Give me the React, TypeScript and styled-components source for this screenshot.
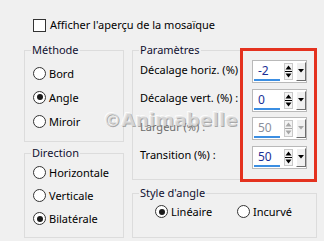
import styled, { createGlobalStyle } from "styled-components";

const GlobalStyle = createGlobalStyle`
	html, body {
		margin: 0;
		padding: 0;
		background: #f0f0f0;
	}
	body {
		font-family: "Noto Sans", "Open Sans", sans-serif;
		font-size: 11px;
		color: #000;
	}
`;

const Dialog = styled.div`
	position: relative;
	width: 324px;
	height: 241px;
	box-sizing: border-box;
	padding: 18px 0 0 24px;
	background: #f0f0f0;
	overflow: hidden;
`;

const TopRow = styled.label`
	display: flex;
	align-items: center;
	gap: 4px;
	height: 14px;
	margin-left: 9px;
	line-height: 14px;
`;

const CheckBox = styled.span`
	width: 13px;
	height: 13px;
	box-sizing: border-box;
	border: 1px solid #333;
	background: #fff;
`;

const Columns = styled.div`
	display: flex;
	gap: 8px;
	margin-top: 10px;
`;

const Column = styled.div<{ $width: number; $gap: number }>`
	display: flex;
	flex-direction: column;
	gap: ${(p) => p.$gap}px;
	width: ${(p) => p.$width}px;
`;

const Group = styled.fieldset<{ $height: number }>`
	margin: 0;
	padding: 0;
	min-width: 0;
	box-sizing: border-box;
	height: ${(p) => p.$height}px;
	border: 1px solid #dcdcdc;
	legend {
		margin-left: 6px;
		padding: 0 1px;
		height: 16px;
		line-height: 16px;
		color: #101030;
	}
`;

const RadioList = styled.div<{ $row: number; $top: number }>`
	display: flex;
	flex-direction: column;
	padding: ${(p) => p.$top}px 0 0 8px;
	> * {
		height: ${(p) => p.$row}px;
	}
`;

const RadioRow = styled.div`
	display: flex;
	align-items: center;
	gap: 3px;
`;

const RadioDot = styled.span<{ $checked?: boolean }>`
	position: relative;
	width: 13px;
	height: 13px;
	box-sizing: border-box;
	border: 1px solid #333;
	border-radius: 50%;
	background: #fff;
	&::after {
		content: "";
		display: ${(p) => (p.$checked ? "block" : "none")};
		position: absolute;
		left: 2.5px;
		top: 2.5px;
		width: 6px;
		height: 6px;
		border-radius: 50%;
		background: #1a1a1a;
	}
`;

const InlineRadios = styled.div`
	display: grid;
	grid-template-columns: 82px auto;
	padding: 3px 0 0 22px;
`;

const ParamGrid = styled.div`
	display: grid;
	grid-template-columns: 1fr 55px;
	align-items: center;
	row-gap: 5.67px;
	padding: 2px 9px 0 7px;
`;

const ParamLabel = styled.span<{ $disabled?: boolean }>`
	margin-top: -5px;
	color: ${(p) => (p.$disabled ? "#6d6d6d" : "#000")};
`;

const Spin = styled.div<{ $disabled?: boolean }>`
	display: flex;
	align-items: center;
	width: 55px;
	height: 23px;
	box-sizing: border-box;
	border: 1px solid #b9b9b9;
	background: #fff;
	color: ${(p) => (p.$disabled ? "#8a8f9c" : "#1a2f96")};
	font-size: 12px;
	svg {
		display: block;
	}
`;

const Value = styled.div`
	width: 26px;
	height: 19px;
	margin: 0 0 0 1px;
	padding-left: 4px;
	box-sizing: border-box;
	line-height: 17px;
	border-bottom: 2px solid #3b8ee2;
`;

const Arrows = styled.div`
	margin-left: 4px;
`;

const DropButton = styled.div`
	display: flex;
	justify-content: center;
	width: 10px;
	height: 19px;
	margin-left: 3px;
	box-sizing: border-box;
	padding-top: 6px;
	background: #f0f0f0;
	border-top: 1px solid #fff;
	border-left: 1px solid #fff;
	border-right: 1px solid #6d6d6d;
	border-bottom: 1px solid #6d6d6d;
`;

const Highlight = styled.div`
	position: absolute;
	left: 240px;
	top: 48px;
	width: 77px;
	height: 134px;
	box-sizing: border-box;
	border: 3px solid #e4321f;
	pointer-events: none;
`;

const Watermark = styled.div`
	position: absolute;
	left: 103px;
	top: 109px;
	font-family: "DejaVu Sans", sans-serif;
	font-size: 18px;
	font-weight: bold;
	letter-spacing: 0.3px;
	color: rgba(225, 225, 225, 0.75);
	text-shadow: 1px 1px 0 rgba(120, 120, 120, 0.6), -1px -1px 0 rgba(255, 255, 255, 0.8);
	pointer-events: none;
`;

function Radio({ label, checked }: { label: string; checked?: boolean }) {
	return (
		<RadioRow>
			<RadioDot $checked={checked} />
			<span>{label}</span>
		</RadioRow>
	);
}

function SpinBox({ value, disabled }: { value: string; disabled?: boolean }) {
	const ink = disabled ? "#a6a6a6" : "#000";
	return (
		<Spin $disabled={disabled}>
			<Value>{value}</Value>
			<Arrows>
				<svg width="9" height="17" viewBox="0 0 9 17">
					<rect x="0.5" y="0.5" width="8" height="16" fill="#f4f4f4" stroke="#c8c8c8" />
					<path d="M4.5 2.5 L7.5 6.5 L1.5 6.5 Z" fill={ink} />
					<line x1="1" y1="8.5" x2="8" y2="8.5" stroke={ink} />
					<path d="M1.5 10.5 L7.5 10.5 L4.5 14.5 Z" fill={ink} />
				</svg>
			</Arrows>
			<DropButton>
				<svg width="6" height="4" viewBox="0 0 6 4">
					<path d="M0 0 L6 0 L3 3.5 Z" fill={ink} />
				</svg>
			</DropButton>
		</Spin>
	);
}

export default function App() {
	return (
		<>
			<GlobalStyle />
			<Dialog>
				<TopRow>
					<CheckBox />
					<span>Afficher l'aperçu de la mosaïque</span>
				</TopRow>
				<Columns>
					<Column $width={100} $gap={3}>
						<Group $height={100}>
							<legend>Méthode</legend>
							<RadioList $row={24} $top={3}>
								<Radio label="Bord" />
								<Radio label="Angle" checked />
								<Radio label="Miroir" />
							</RadioList>
						</Group>
						<Group $height={93}>
							<legend>Direction</legend>
							<RadioList $row={23} $top={0}>
								<Radio label="Horizontale" />
								<Radio label="Verticale" />
								<Radio label="Bilatérale" checked />
							</RadioList>
						</Group>
					</Column>
					<Column $width={185} $gap={5}>
						<Group $height={138}>
							<legend>Paramètres</legend>
							<ParamGrid>
								<ParamLabel>Décalage horiz. (%)</ParamLabel>
								<SpinBox value="-2" />
								<ParamLabel>Décalage vert. (%) :</ParamLabel>
								<SpinBox value="0" />
								<ParamLabel $disabled>Largeur (%) :</ParamLabel>
								<SpinBox value="50" disabled />
								<ParamLabel>Transition (%) :</ParamLabel>
								<SpinBox value="50" />
							</ParamGrid>
						</Group>
						<Group $height={53}>
							<legend>Style d'angle</legend>
							<InlineRadios>
								<Radio label="Linéaire" checked />
								<Radio label="Incurvé" />
							</InlineRadios>
						</Group>
					</Column>
				</Columns>
				<Watermark>©Animabelle</Watermark>
				<Highlight />
			</Dialog>
		</>
	);
}
